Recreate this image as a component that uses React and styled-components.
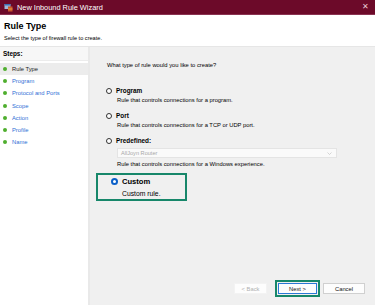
import React from "react";
import styled, { createGlobalStyle } from "styled-components";

const Global = createGlobalStyle`
  html, body { margin: 0; padding: 0; }
  body { font-family: "Liberation Sans", Arial, sans-serif; color: #000; }
`;

const Window = styled.div`
  width: 375px;
  height: 305px;
  display: flex;
  flex-direction: column;
  background: #f0f0f0;
  overflow: hidden;
`;

const TitleBar = styled.div`
  height: 14px;
  background: #6c0a29;
  border-bottom: 1px solid #8a3351;
  display: flex;
  align-items: center;
  padding: 0 6px 0 4px;
  color: #fff;
  font-size: 7.4px;
  gap: 4px;
`;

const TitleText = styled.span`
  flex: 1;
`;

const Close = styled.span`
  color: #e8c9d2;
  font-size: 8px;
  line-height: 1;
`;

const Header = styled.div`
  height: 31px;
  background: #fff;
  border-bottom: 1px solid #e6e6e6;
  padding: 0 4px;
  display: flex;
  flex-direction: column;
  justify-content: center;
  gap: 4px;
`;

const Heading = styled.div`
  font-weight: bold;
  font-size: 9px;
`;

const SubHeading = styled.div`
  font-size: 5.6px;
`;

const Body = styled.div`
  flex: 1;
  display: flex;
`;

const Sidebar = styled.div`
  width: 88px;
  background: #fff;
  border-right: 2px solid #e9e9e9;
  display: flex;
  flex-direction: column;
`;

const StepsLabel = styled.div`
  font-weight: bold;
  font-size: 6.4px;
  padding: 3px 3px;
  background: #f7f7f7;
  border-bottom: 1px solid #ececec;
`;

const StepList = styled.div`
  display: flex;
  flex-direction: column;
  padding-top: 2px;
`;

const Step = styled.div`
  height: 12.2px;
  display: flex;
  align-items: center;
  gap: 5px;
  padding-left: 3px;
  font-size: 5.8px;
  color: ${(p) => (p.$active ? "#222" : "#2f6fd6")};
  background: ${(p) => (p.$active ? "#ececec" : "transparent")};
`;

const Dot = styled.span`
  width: 4px;
  height: 4px;
  border-radius: 50%;
  background: #4fae2e;
`;

const Main = styled.div`
  flex: 1;
  display: flex;
  flex-direction: column;
  padding: 15px 0 8px 0;
`;

const Question = styled.div`
  font-size: 5.8px;
  padding-left: 17px;
  margin-bottom: 19px;
`;

const Options = styled.div`
  display: flex;
  flex-direction: column;
  gap: 9px;
  padding-left: 16px;
`;

const Option = styled.div`
  display: flex;
  flex-direction: column;
  gap: 3px;
`;

const OptionRow = styled.div`
  display: flex;
  align-items: center;
  gap: 4px;
  font-weight: bold;
  font-size: 6.4px;
`;

const Radio = styled.span`
  width: 6px;
  height: 6px;
  border-radius: 50%;
  border: 1px solid #333;
  box-sizing: border-box;
  background: #fff;
`;

const Desc = styled.div`
  font-size: 5.8px;
  padding-left: 11px;
`;

const Select = styled.div`
  margin: 1px 0 0 11px;
  width: 220px;
  height: 10px;
  box-sizing: border-box;
  background: #fafafa;
  border: 1px solid #e4e4e4;
  display: flex;
  align-items: center;
  justify-content: space-between;
  padding: 0 4px 0 3px;
  font-size: 5.6px;
  color: #a8a8a8;
`;

const Highlight = styled.div`
  margin: -3px 0 0 -10px;
  width: 91px;
  height: 28px;
  box-sizing: border-box;
  border: 2px solid #17876a;
  display: flex;
  flex-direction: column;
  justify-content: center;
  gap: 4px;
  padding-left: 13px;
`;

const CustomRow = styled.div`
  display: flex;
  align-items: center;
  gap: 4px;
  font-weight: bold;
  font-size: 7.6px;
`;

const RadioOn = styled.span`
  width: 7px;
  height: 7px;
  border-radius: 50%;
  background: #fff;
  border: 2px solid #0a5fc8;
  box-sizing: border-box;
`;

const CustomDesc = styled.div`
  font-size: 6.8px;
  padding-left: 11px;
`;

const Spacer = styled.div`
  flex: 1;
`;

const Footer = styled.div`
  display: flex;
  justify-content: flex-end;
  align-items: center;
  gap: 4px;
  padding-right: 10px;
`;

const Button = styled.div`
  width: ${(p) => p.$w}px;
  height: 11px;
  box-sizing: border-box;
  display: flex;
  align-items: center;
  justify-content: center;
  font-size: 5.8px;
  background: #fdfdfd;
  border: 1px solid ${(p) => (p.$disabled ? "#f3f3f3" : p.$primary ? "#2a78d6" : "#d0d0d0")};
  color: ${(p) => (p.$disabled ? "#b0b0b0" : "#111")};
`;

const Focus = styled.div`
  border: 2px solid #17876a;
  padding: 1px;
  margin: 0 -1px 0 4px;
`;

const ShieldIcon = () => (
  <svg width="9" height="9" viewBox="0 0 9 9">
    <rect x="0.5" y="1" width="6" height="5" fill="#9fb8d8" />
    <rect x="0.5" y="1" width="6" height="1.5" fill="#3b6fb5" />
    <rect x="4" y="3.5" width="4.5" height="5" fill="#c9572d" />
    <rect x="4" y="5.5" width="4.5" height="1" fill="#e8a23a" />
  </svg>
);

const steps = ["Rule Type", "Program", "Protocol and Ports", "Scope", "Action", "Profile", "Name"];

export default function App() {
  return (
    <>
      <Global />
      <Window>
        <TitleBar>
          <ShieldIcon />
          <TitleText>New Inbound Rule Wizard</TitleText>
          <Close>✕</Close>
        </TitleBar>
        <Header>
          <Heading>Rule Type</Heading>
          <SubHeading>Select the type of firewall rule to create.</SubHeading>
        </Header>
        <Body>
          <Sidebar>
            <StepsLabel>Steps:</StepsLabel>
            <StepList>
              {steps.map((s, i) => (
                <Step key={s} $active={i === 0}>
                  <Dot />
                  {s}
                </Step>
              ))}
            </StepList>
          </Sidebar>
          <Main>
            <Question>What type of rule would you like to create?</Question>
            <Options>
              <Option>
                <OptionRow>
                  <Radio />
                  Program
                </OptionRow>
                <Desc>Rule that controls connections for a program.</Desc>
              </Option>
              <Option>
                <OptionRow>
                  <Radio />
                  Port
                </OptionRow>
                <Desc>Rule that controls connections for a TCP or UDP port.</Desc>
              </Option>
              <Option>
                <OptionRow>
                  <Radio />
                  Predefined:
                </OptionRow>
                <Select>
                  <span>AllJoyn Router</span>
                  <svg width="5" height="3" viewBox="0 0 5 3">
                    <path d="M0.5 0.5 L2.5 2.5 L4.5 0.5" stroke="#c4c4c4" fill="none" strokeWidth="0.7" />
                  </svg>
                </Select>
                <Desc>Rule that controls connections for a Windows experience.</Desc>
              </Option>
              <Highlight>
                <CustomRow>
                  <RadioOn />
                  Custom
                </CustomRow>
                <CustomDesc>Custom rule.</CustomDesc>
              </Highlight>
            </Options>
            <Spacer />
            <Footer>
              <Button $w={33} $disabled>
                &lt; Back
              </Button>
              <Focus>
                <Button $w={39} $primary>
                  Next &gt;
                </Button>
              </Focus>
              <Button $w={42}>Cancel</Button>
            </Footer>
          </Main>
        </Body>
      </Window>
    </>
  );
}
